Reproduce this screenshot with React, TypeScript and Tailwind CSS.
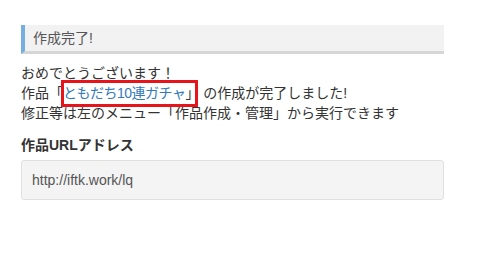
export default function App() {
  return (
    <div className="min-h-screen bg-white font-['Liberation_Sans','Noto_Sans_CJK_JP',sans-serif] text-[#333]">
      <div className="ml-[21px] w-[423px] pt-[25px]">
        {/* Heading */}
        <div className="h-[29px] bg-[#f2f2f2] border-l-[4px] border-l-[#75aee0] border-b-[3px] border-b-[#d6d6d6] pl-[8px] flex items-center text-[14px] text-[#555]">
          作成完了!
        </div>

        {/* Message */}
        <div className="mt-[9px] text-[14px] leading-[20px]">
          <p>おめでとうございます！</p>
          <p>
            作品「
            <span className="relative">
              <a href="#" className="text-[#337ab7] tracking-[-0.5px]">ともだち10連ガチャ</a>」
              <span className="absolute left-[-2px] right-[1px] top-[-5px] bottom-[-6px] border-[3px] border-[#e8141c]" />
            </span>{' '}
            の作成が完了しました!
          </p>
          <p>修正等は左のメニュー「作品作成・管理」から実行できます</p>
        </div>

        {/* URL */}
        <div className="mt-[12px]">
          <label className="block text-[14px] font-bold leading-[20px]">作品URLアドレス</label>
          <div className="mt-[5px] h-[40px] rounded-[3px] border border-[#e0e0e0] bg-[#f4f4f4] px-[10px] flex items-center text-[14px] text-[#555]">
            http://iftk.work/lq
          </div>
        </div>
      </div>
    </div>
  )
}
